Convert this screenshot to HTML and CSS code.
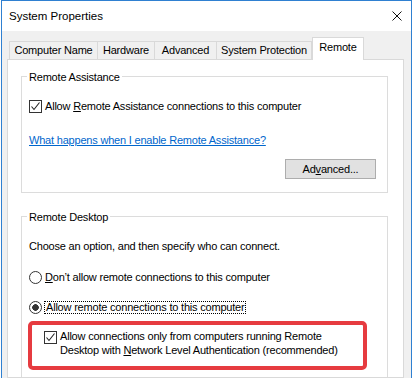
FILE: index.html
```html
<!DOCTYPE html>
<html>
<head>
<meta charset="utf-8">
<title>System Properties</title>
<link rel="stylesheet" href="styles.css">
</head>
<body>
<div class="window">
  <div class="titlebar">
    <span class="title">System Properties</span>
    <svg class="close" width="10" height="10" viewBox="0 0 10 10"><path d="M0.5 0.5 L9.5 9.5 M9.5 0.5 L0.5 9.5" stroke="#111" stroke-width="1" fill="none"/></svg>
  </div>
  <div class="dialog">
    <div class="tabs">
      <div class="tab tab-name">Computer Name</div>
      <div class="tab tab-hw">Hardware</div>
      <div class="tab tab-adv">Advanced</div>
      <div class="tab tab-sp">System Protection</div>
      <div class="tab tab-sel">Remote</div>
    </div>
    <div class="panel">
      <div class="group">
        <div class="group-title">Remote Assistance</div>
        <div class="check-row">
          <span class="checkbox"><svg width="11" height="11" viewBox="0 0 11 11"><path d="M1.5 5.5 L4 8.5 L9.5 1.5" stroke="#222" stroke-width="1.1" fill="none"/></svg></span>
          <span>Allow <u>R</u>emote Assistance connections to this computer</span>
        </div>
        <a class="link" href="#">What happens when I enable Remote Assistance?</a>
        <button class="btn">Ad<u>v</u>anced...</button>
      </div>
      <div class="group group-rd">
        <div class="group-title">Remote Desktop</div>
        <p class="hint">Choose an option, and then specify who can connect.</p>
        <div class="radio-row radio-first">
          <span class="radio"></span>
          <span><u>D</u>on’t allow remote connections to this computer</span>
        </div>
        <div class="radio-row">
          <span class="radio on"></span>
          <span class="focus">Allow remote connections to this computer</span>
        </div>
        <div class="nla-box">
          <span class="checkbox"><svg width="11" height="11" viewBox="0 0 11 11"><path d="M1.5 5.5 L4 8.5 L9.5 1.5" stroke="#222" stroke-width="1.1" fill="none"/></svg></span>
          <span class="nla-text">Allow connections only from computers running Remote<br>Desktop with <u>N</u>etwork Level Authentication (recommended)</span>
        </div>
      </div>
    </div>
  </div>
</div>
</body>
</html>
```

FILE: styles.css
```css
body {
	margin: 0;
	height: 378px;
	overflow: hidden;
	background: #ffffff;
	font-family: "Liberation Sans", Arial, sans-serif;
	font-size: 11px;
	letter-spacing: -0.2px;
	color: #000000;
}
.window {
	margin-left: 1px;
	width: 409px;
	height: 377px;
	border: 1px solid #2f80d1;
	border-bottom: none;
	display: flex;
	flex-direction: column;
}
.titlebar {
	height: 30px;
	flex: none;
	background: #ffffff;
	display: flex;
	align-items: center;
	justify-content: space-between;
	padding: 0 9px 0 7px;
}
.title {
	font-size: 11.5px;
	letter-spacing: 0;
}
.dialog {
	flex: 1;
	min-height: 0;
	background: #f0f0f0;
	padding: 6px 7px 0 5px;
	display: flex;
	flex-direction: column;
}
.tabs {
	display: flex;
	align-items: flex-end;
	height: 22px;
	flex: none;
	margin-left: 2px;
}
.tab {
	box-sizing: border-box;
	height: 18px;
	line-height: 17px;
	text-align: center;
	border: 1px solid #d9d9d9;
	border-bottom: none;
	border-right: none;
	background: #f0f0f0;
	white-space: nowrap;
}
.tab-name { width: 88px; }
.tab-hw { width: 57px; }
.tab-adv { width: 62px; }
.tab-sp { width: 96px; border-right: 1px solid #d9d9d9; }
.tab-sel {
	width: 52px;
	height: 23px;
	line-height: 19px;
	margin-bottom: -1px;
	background: #ffffff;
	border-right: 1px solid #d9d9d9;
	position: relative;
	z-index: 1;
}
.panel {
	flex: 1;
	min-height: 0;
	overflow: hidden;
	background: #ffffff;
	border: 1px solid #d9d9d9;
	padding: 16px 15px 0 13px;
}
.group {
	border: 1px solid #dcdcdc;
	padding: 0 11px 13px 7px;
	display: flex;
	flex-direction: column;
}
.group-rd {
	margin-top: 23px;
	height: 200px;
}
.group-title {
	align-self: flex-start;
	margin: -8px 0 0 -2px;
	padding: 0 2px;
	line-height: 16px;
	background: #ffffff;
}
.check-row {
	display: flex;
	align-items: center;
	gap: 3px;
	line-height: 16px;
	margin-top: 13px;
}
.checkbox {
	box-sizing: border-box;
	width: 13px;
	height: 13px;
	flex: none;
	border: 1px solid #333333;
	background: #ffffff;
	display: flex;
	align-items: center;
	justify-content: center;
}
.link {
	align-self: flex-start;
	margin-top: 18px;
	line-height: 16px;
	color: #0066cc;
	text-decoration: underline;
}
.btn {
	align-self: flex-end;
	margin-top: 11px;
	width: 91px;
	height: 20px;
	padding: 0;
	background: #e1e1e1;
	border: 1px solid #adadad;
	font-family: inherit;
	font-size: 11px;
	letter-spacing: -0.2px;
	color: #000000;
}
.hint {
	margin: 13px 0 0 0;
	line-height: 16px;
}
.radio-row {
	display: flex;
	align-items: center;
	gap: 3px;
	height: 16px;
	margin-top: 14px;
}
.radio-first {
	margin-top: 15px;
}
.radio {
	box-sizing: border-box;
	width: 13px;
	height: 13px;
	flex: none;
	border: 1px solid #333333;
	border-radius: 50%;
	background: #ffffff;
}
.radio.on {
	background: radial-gradient(circle, #333333 3px, #ffffff 3.6px);
}
.focus {
	margin-left: -1px;
	padding: 0 1px;
	line-height: 11px;
	border: 1px dotted #000000;
}
.nla-box {
	margin: 6px 0 0 -1px;
	width: 339px;
	box-sizing: border-box;
	border: 4px solid #e63b40;
	border-radius: 5px;
	padding: 4px 0 9px 12px;
	display: flex;
	align-items: flex-start;
	gap: 3px;
}
.nla-box .checkbox {
	margin-top: 2px;
}
.nla-text {
	line-height: 14px;
}
```
